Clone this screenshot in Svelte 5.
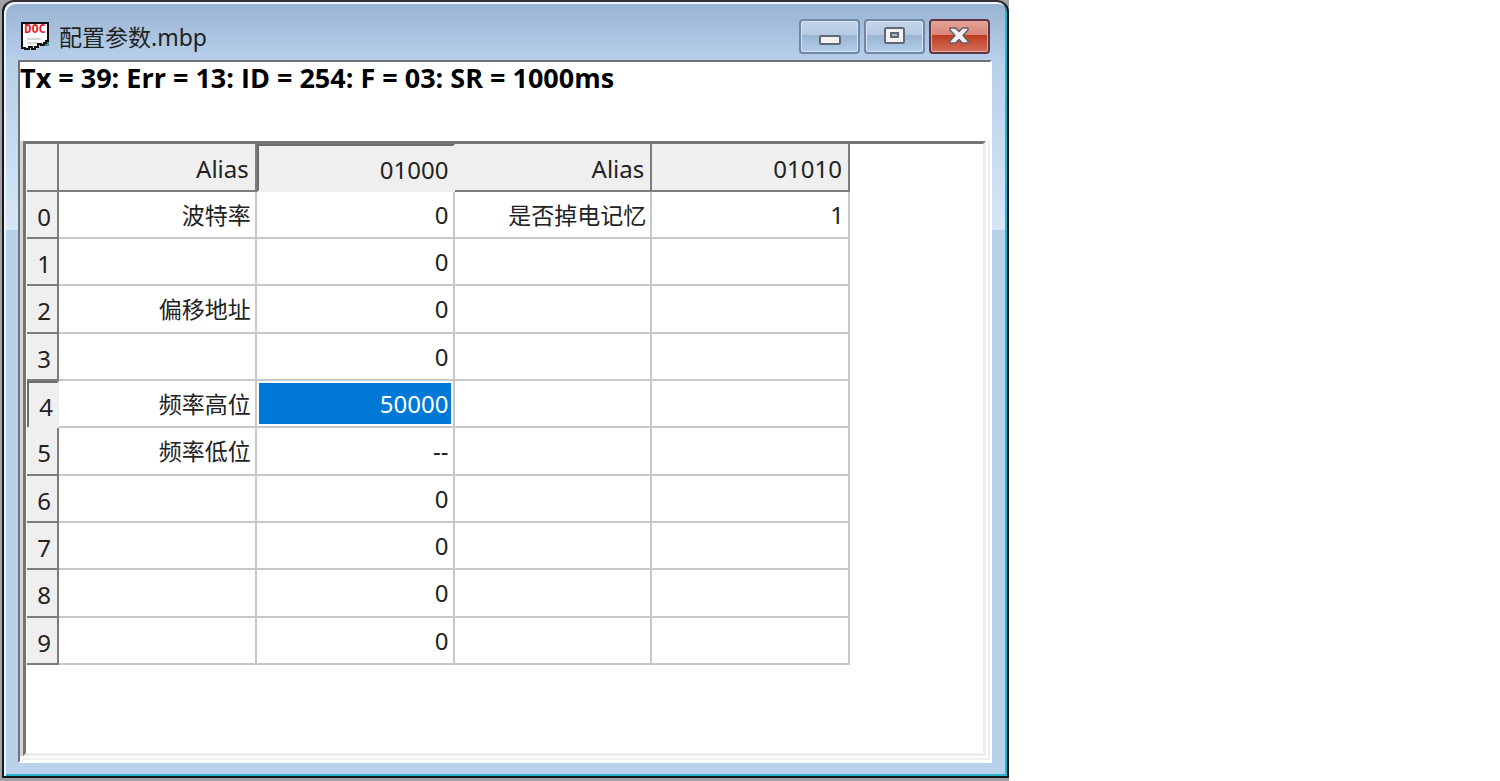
<script>
	const title = '配置参数.mbp';

	let status = $state({ tx: 39, err: 13, id: 254, f: '03', sr: 1000 });

	let selected = $state({ row: 4, col: 1 });

	const columns = ['Alias', '01000', 'Alias', '01010'];

	let rows = $state([
		['波特率', '0', '是否掉电记忆', '1'],
		['', '0', '', ''],
		['偏移地址', '0', '', ''],
		['', '0', '', ''],
		['频率高位', '50000', '', ''],
		['频率低位', '--', '', ''],
		['', '0', '', ''],
		['', '0', '', ''],
		['', '0', '', ''],
		['', '0', '', '']
	]);

	function select(row, col) {
		selected = { row, col };
	}
</script>

<div class="desktop">
	<section class="window">
		<header class="titlebar">
			<svg class="doc-icon" viewBox="0 0 30 30" aria-hidden="true">
				<path d="M2 1H28V19h-2v2h-2v2h-3v-1h-3v3h-3v2h-3v-2h-3v2H5v-1H2z" fill="#fff" stroke="#111" stroke-width="2" />
				<path d="M7 17h14M7 21h10" stroke="#c9c9c9" stroke-width="1.4" />
				<path d="M25 23h3v-3" stroke="#35938c" stroke-width="2" fill="none" />
				<text x="15" y="11" text-anchor="middle">DOC</text>
			</svg>
			<h1>{title}</h1>
			<div class="controls">
				<button type="button" aria-label="Minimize">
					<svg viewBox="0 0 22 18" aria-hidden="true">
						<rect x="1" y="8" width="20" height="8" rx="1.500" fill="#f2f2f2" stroke="#626773" stroke-width="2" />
					</svg>
				</button>
				<button type="button" aria-label="Maximize">
					<svg viewBox="0 0 22 18" aria-hidden="true">
						<rect x="1" y="0" width="19" height="15" rx="1.500" fill="#f2f2f2" stroke="#626773" stroke-width="2" />
						<rect x="7" y="5" width="7" height="4" fill="#a5bad4" stroke="#626773" stroke-width="2" />
					</svg>
				</button>
				<button type="button" class="close" aria-label="Close">
					<svg viewBox="0 0 22 18" aria-hidden="true">
						<path d="M1 0h5.500L10 3.500 13.500 0H19v2L14 7.500l5 5.500v2h-5.500L10 11.500 6.500 15H1v-2l5-5.500L1 2z" fill="#f2f2f2" stroke="#665d68" stroke-width="1.500" stroke-linejoin="round" />
					</svg>
				</button>
			</div>
		</header>

		<div class="client">
			<p class="status">
				Tx = {status.tx}: Err = {status.err}: ID = {status.id}: F = {status.f}: SR = {status.sr}ms
			</p>

			<div class="grid-frame">
				<table>
					<thead>
						<tr>
							<th class="num"></th>
							{#each columns as column, c}
								<th class:pressed={c === selected.col}>{column}</th>
							{/each}
						</tr>
					</thead>
					<tbody>
						{#each rows as row, r}
							<tr>
								<th class="num" class:pressed={r === selected.row}>{r}</th>
								{#each row as cell, c}
									<td
										class:alias={c % 2 === 0}
										class:selected={r === selected.row && c === selected.col}
										onclick={() => select(r, c)}>{cell}</td>
								{/each}
							</tr>
						{/each}
					</tbody>
				</table>
			</div>
		</div>
	</section>
</div>

<style>
	:global(body) { background: #fff; }

	.desktop {
		box-sizing: border-box;
		max-width: 1009px;
		padding: 0 0 4px 2px;
		background: #a3a1a3;
		font-family: 'Noto Sans', 'Noto Sans CJK SC', sans-serif;
		font-size: 24px;
		color: #222;
	}

	.window {
		border: 2px solid #12181c;
		border-top-color: #332e33;
		border-radius: 12px 12px 0 0;
		padding: 0 15px 13px 14px;
		box-shadow: inset 2px 2px #eef5fc, inset -2px -2px #25b4cc;
		background:
			linear-gradient(#98b3d2 0, #b8d0ea 60px, #d8e6f7 228px, #b9d1ea 228px);
	}

	.titlebar {
		display: flex;
		align-items: center;
		height: 58px;
		padding: 11px 2px 0 2px;
		box-sizing: border-box;
	}

	.doc-icon { width: 30px; height: 30px; overflow: visible; }

	.doc-icon text {
		font-family: 'DejaVu Sans Mono', monospace;
		font-size: 12px;
		font-weight: 700;
		fill: #ee1c25;
	}

	h1 {
		flex: 1;
		margin: 0 0 0 9px;
		font-size: 23px;
		font-weight: 400;
		line-height: 32px;
	}

	.controls { display: flex; gap: 4px; }

	button {
		display: grid;
		place-items: center;
		width: 61px;
		height: 35px;
		padding: 0;
		border: 2px solid #7287a5;
		border-radius: 4px;
		background: linear-gradient(#c3d5e9 0, #b5cbe3 45%, #98b4d2 45%, #b3cde9 100%);
		box-shadow: inset 0 0 0 1px #d5e4f3;
	}

	button svg { width: 22px; height: 18px; overflow: visible; }

	.close {
		border-color: #5b3545;
		background: linear-gradient(#e5a598 0, #d98575 45%, #bd3a20 45%, #d3705a 100%);
		box-shadow: inset 0 0 0 1px #e8a79b;
	}

	.client {
		border: 2px solid #6f7379;
		border-right-color: #fff;
		border-bottom-color: #fff;
		background: #fff;
	}

	.status {
		margin: 0;
		height: 79px;
		font-family: 'Open Sans', 'Noto Sans', sans-serif;
		font-size: 27px;
		font-weight: 700;
		line-height: 32px;
		color: #000;
	}

	.grid-frame {
		padding: 0 0 88px 1px;
		border: 3px solid #747474;
		border-right-color: #ececec;
		border-bottom-color: #ececea;
		box-shadow: -3px 0 #d6d6d6, 0 0 0 2px #fff, 2px 2px 0 2px #eee;
		margin: 0 4px 5px 3px;
	}

	table { border-collapse: separate; border-spacing: 0; table-layout: fixed; width: 823px; }

	th, td {
		box-sizing: border-box;
		height: 47px;
		padding: 0 6px;
		border-right: 2px solid #c8c8c8;
		border-bottom: 2px solid #c8c8c8;
		text-align: right;
		font-weight: 400;
		line-height: 32px;
		white-space: nowrap;
	}

	tbody tr:nth-child(3n) td { height: 48px; }

	th {
		background: #efefef;
		border-color: #7c7c7c;
	}

	thead th { height: 48px; padding-top: 4px; }

	.num { width: 32px; padding-top: 4px; }

	td { padding-right: 4px; }

	.alias { font-size: 23px; }

	.pressed {
		padding-right: 4px;
		border-color: #efefef;
		border-top: 2px solid #6c6c6c;
		border-left: 2px solid #6c6c6c;
	}

	.selected {
		background: #0078d7;
		color: #fff;
		box-shadow: inset 0 0 0 2px #fff;
	}
</style>
